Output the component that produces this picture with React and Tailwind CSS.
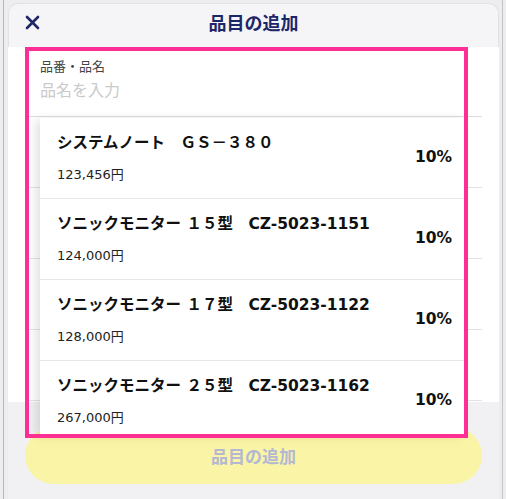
import React from 'react';

const items = [
  { name: 'システムノート　ＧＳ－３８０', price: '123,456円', tax: '10%' },
  { name: 'ソニックモニター １５型　CZ-5023-1151', price: '124,000円', tax: '10%' },
  { name: 'ソニックモニター １７型　CZ-5023-1122', price: '128,000円', tax: '10%' },
  { name: 'ソニックモニター ２５型　CZ-5023-1162', price: '267,000円', tax: '10%' },
];

const font = { fontFamily: '"Noto Sans CJK JP", "Noto Sans", sans-serif' };
const listFont = { fontFamily: '"DejaVu Sans", "Noto Sans CJK JP", sans-serif' };

export default function App() {
  return (
    <div className="flex h-[499px] w-[506px] overflow-hidden bg-[#ededf0]" style={font}>
      <div className="w-[8px] shrink-0 pl-[3px]">
        <div className="h-full w-px bg-[#b8b8bc]" />
      </div>

      <div className="relative flex w-[491px] shrink-0 flex-col pt-[3px]">
        <div className="flex h-[44px] shrink-0 items-center rounded-t-[10px] border border-b-0 border-[#e2e2e6] bg-[#f5f5f8] px-[16px] pb-[6px]">
          <svg width="15" height="15" viewBox="0 0 15 15" className="shrink-0">
            <path d="M2 2 L13 13 M13 2 L2 13" stroke="#1d2668" strokeWidth="2.6" strokeLinecap="round" />
          </svg>
          <h1 className="flex-1 pr-[15px] text-center text-[18px] font-bold text-[#1d2668]">品目の追加</h1>
        </div>

        <div className="flex h-[355px] shrink-0 flex-col bg-white">
          <div className="mx-[17px] flex h-[70px] flex-col border-b border-[#dcdcdc] pl-[15px] pt-[10px]">
            <span className="text-[13px] leading-[18px] text-[#444]">品番・品名</span>
            <span className="mt-[3px] text-[16px] leading-[22px] text-[#cacaca]">品名を入力</span>
          </div>
          {[0, 1, 2, 3].map((i) => (
            <div key={i} className="mx-[17px] h-[71px] border-b border-[#e3e3e3]" />
          ))}
        </div>

        <div className="flex-1 bg-[#f1f1f4] px-[17px] pt-[25px]">
          <button className="flex h-[57px] w-full items-center justify-center rounded-full bg-[#f9f4a6] text-[17px] font-bold text-[#b4b8d2]">
            品目の追加
          </button>
        </div>

        <div
          className="absolute left-[32px] top-[118px] h-[316px] w-[425px] overflow-hidden bg-white shadow-[-4px_2px_10px_rgba(0,0,0,0.12)]"
          style={listFont}
        >
          {items.map((it) => (
            <div key={it.name} className="flex h-[81px] items-center border-b border-[#e6e6e6] pl-[17px] pr-[13px]">
              <div className="flex flex-1 flex-col">
                <span className="text-[15.5px] font-bold leading-[22px] text-[#111]">{it.name}</span>
                <span className="mt-[12px] text-[13px] leading-[18px] text-[#222]">{it.price}</span>
              </div>
              <span className="text-[15.5px] font-bold text-[#111]">{it.tax}</span>
            </div>
          ))}
        </div>

        <div className="pointer-events-none absolute left-[17px] top-[47px] h-[391px] w-[443px] border-[4px] border-[#fd2f94]" />
      </div>

      <div className="flex-1 pl-[3px]">
        <div className="h-full w-px bg-[#c4c4c8]" />
      </div>
    </div>
  );
}
